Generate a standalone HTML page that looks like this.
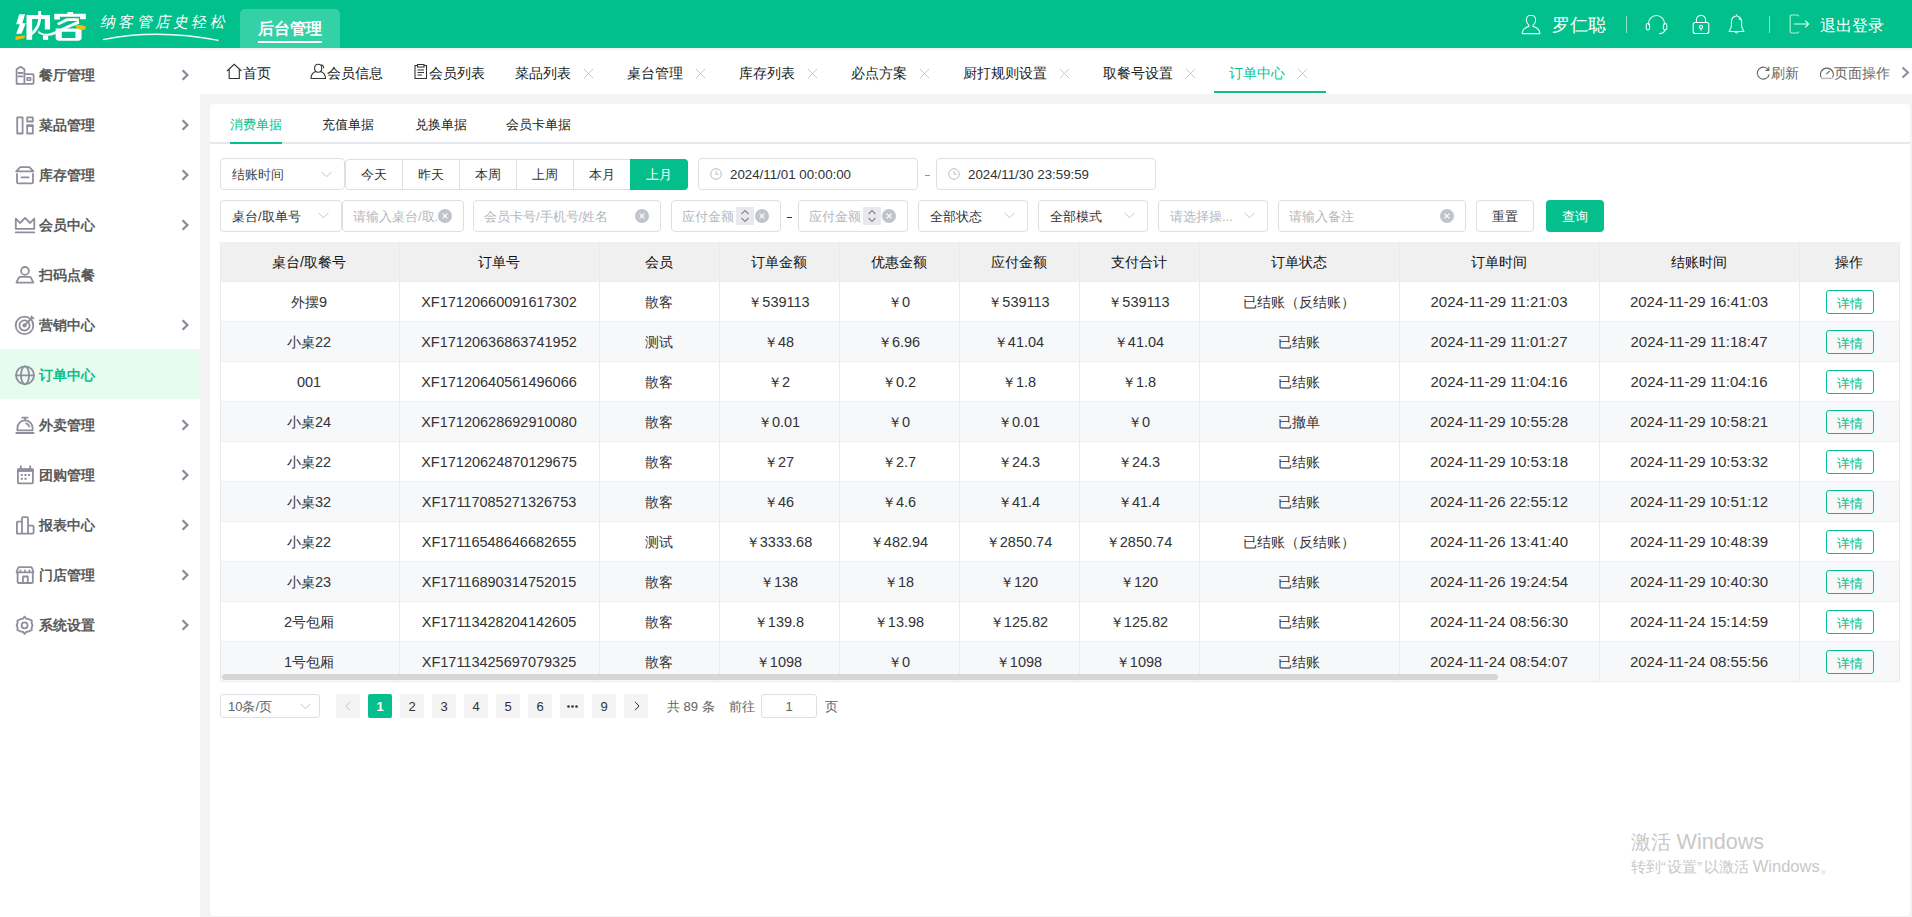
<!DOCTYPE html>
<html><head><meta charset="utf-8">
<style>
*{margin:0;padding:0;box-sizing:border-box}
html,body{width:1912px;height:917px;overflow:hidden;background:#fff;font-family:"Liberation Sans",sans-serif;color:#303133}
.a{position:absolute;white-space:nowrap}
#hdr{position:absolute;left:0;top:0;width:1912px;height:49px;background:#01C08C}
#side{position:absolute;left:0;top:48px;width:200px;height:869px;background:#fff}
#main{position:absolute;left:200px;top:48px;width:1712px;height:869px;background:#f3f3f3}
#tabbar{position:absolute;left:200px;top:49px;width:1712px;height:45px;background:#fff;border-top:1px solid #f5f1f3}
#card{position:absolute;left:210px;top:104px;width:1700px;height:812px;background:#fff;border-radius:4px}
.si{position:absolute;left:0;width:200px;height:50px}
.si .t{position:absolute;left:39px;top:1px;line-height:50px;font-size:14px;font-weight:bold;color:#5a5a5a}
.si svg.ic{position:absolute;left:15px;top:16px}
.si svg.ch{position:absolute;left:180px;top:19px}
.tb{position:absolute;top:49px;height:45px;line-height:46px;font-size:14px;color:#222}
.tb .x{position:absolute;top:19px;width:10px;height:10px}
</style></head><body>
<div id="hdr">
  <svg class="a" style="left:0;top:0" width="100" height="48" viewBox="0 0 100 48">
   <g transform="translate(10 5) scale(0.04708)" fill="#fff">
    <path d="M195 195H320L262 385H335L245 610H130L210 410H130Z"/>
    <path d="M115 670L325 648L300 705L120 745Z" fill="#F5BD0A"/>
    <path d="M350 215H850V520H740V295H470V740H350Z"/>
    <path d="M600 130H660V300Q640 520 470 645L470 560Q590 450 600 300Z"/>
    <path d="M600 540Q700 640 850 600L1000 540Q1200 440 1460 330L1470 400Q1150 520 960 620Q760 700 600 600Z"/>
    <rect x="700" y="650" width="110" height="90"/>
    <rect x="1220" y="150" width="120" height="50"/>
    <path d="M940 185H1610V305H1490V250H1060V310H940Z"/>
    <path d="M1000 390L1200 280H1460V340H1230L1030 430Z"/>
    <path d="M970 500H1520V700Q1520 760 1420 760H1070Q970 760 970 700ZM1100 570V700H1390V570Z" fill-rule="evenodd"/>
    <path d="M1360 430Q1480 410 1610 450L1600 520Q1520 540 1470 520Z" fill="#F5BD0A"/>
   </g>
  </svg>
  <div class="a" style="left:101px;top:11px;font-size:15px;line-height:22px;color:#fff;letter-spacing:3.3px;font-family:'Liberation Serif',serif;transform:skewX(-12deg);font-weight:300">纳客管店史轻松</div>
  <svg class="a" style="left:100px;top:32px" width="125" height="10" viewBox="0 0 125 10"><path d="M3 7.6Q57 -3.5 118.7 8.4" stroke="#f0fff8" stroke-width="1.3" fill="none"/></svg>
  <div class="a" style="left:240px;top:9px;width:100px;height:40px;background:#33D1A5;border-radius:5px 5px 0 0"></div>
  <div class="a" style="left:258px;top:18px;font-size:16px;color:#fff;line-height:22px;font-weight:bold">后台管理</div>
  <div class="a" style="left:258px;top:40.5px;width:64px;height:2.5px;background:#fff"></div>
  <svg class="a" style="left:1520px;top:14px" width="22" height="21" viewBox="0 0 22 21" fill="none" stroke="#e0fff3" stroke-width="1.1"><path d="M11 1.2C8.2 1.2 6.4 3.4 6.4 6.2C6.4 8.4 7.6 10.2 9 11.2V12.4C6 13.2 2.2 15.4 2.2 19.6H19.8C19.8 15.4 16 13.2 13 12.4V11.2C14.4 10.2 15.6 8.4 15.6 6.2C15.6 3.4 13.8 1.2 11 1.2Z"/></svg>
  <div class="a" style="left:1552px;top:13px;font-size:18px;line-height:24px;color:#fff">罗仁聪</div>
  <div class="a" style="left:1626px;top:16px;width:1px;height:17px;background:rgba(255,255,255,0.55)"></div>
  <svg class="a" style="left:1645px;top:14px" width="23" height="21" viewBox="0 0 23 21" fill="none" stroke="#e0fff3" stroke-width="1.1"><path d="M3.5 11V9.5A8 8 0 0 1 19.5 9.5V11"/><rect x="1.2" y="9.5" width="3.4" height="6.5" rx="1.7"/><rect x="18.4" y="9.5" width="3.4" height="6.5" rx="1.7"/><path d="M20 16Q19 19.6 14 19.8"/></svg>
  <svg class="a" style="left:1692px;top:14px" width="18" height="21" viewBox="0 0 18 21" fill="none" stroke="#fff" stroke-width="1.1"><path d="M4.4 8.5V6A4.6 4.6 0 0 1 13.6 6V8.5"/><rect x="1.2" y="8.5" width="15.6" height="11" rx="2"/><circle cx="9" cy="13" r="1.6"/><path d="M9 14.6V16.4"/></svg>
  <svg class="a" style="left:1728px;top:13px" width="17" height="22" viewBox="0 0 17 22" fill="none" stroke="#e0fff3" stroke-width="1.1"><path d="M8.5 1.2V3M8.5 3C5 3 3.4 5.8 3.4 9V13.5L1.2 18.5H15.8L13.6 13.5V9C13.6 5.8 12 3 8.5 3ZM6.8 18.8Q8.5 21.2 10.2 18.8M10.6 4.8Q11.8 5.6 12.2 7"/></svg>
  <div class="a" style="left:1769px;top:16px;width:1px;height:17px;background:rgba(255,255,255,0.55)"></div>
  <svg class="a" style="left:1789px;top:14px" width="22" height="20" viewBox="0 0 22 20" fill="none" stroke-width="1.2"><path d="M9.5 2.2V2A1.2 1.2 0 0 0 8.3 1H2.4A1.2 1.2 0 0 0 1.2 2.2V17.8A1.2 1.2 0 0 0 2.4 19H8.3A1.2 1.2 0 0 0 9.5 17.8V17.5" stroke="#a8f0d6"/><path d="M5 10H19.5M16.2 6.6L19.6 10L16.2 13.4" stroke="#e0fff3"/></svg>
  <div class="a" style="left:1820px;top:14px;font-size:16px;line-height:24px;color:#fff">退出登录</div>
</div>
<div id="side"></div>
<div class="si" style="top:49px;"><svg class="ic" style="top:13px;left:12px" width="28" height="28" viewBox="0 0 28 28" fill="none" stroke="#8f8e9d" stroke-width="1.8" stroke-linejoin="round" stroke-linecap="round"><path d="M4.6 21.8V7.3L8.5 4.8L12.4 7.3V21.8ZM12.4 12.1H20.6Q21.6 12.1 21.6 13.1V20.8Q21.6 21.8 20.6 21.8H4.6M6.6 11H10.4M6.6 14.4H10.4"/><rect x="15.2" y="15.8" width="3.4" height="2.4" stroke-width="1.6"/></svg><div class="t" style="">餐厅管理</div><svg class="ch" width="10" height="14" viewBox="0 0 10 14"><path d="M2.6 2.2L7.4 7L2.6 11.8" fill="none" stroke="#8c8b9b" stroke-width="2.3"/></svg></div>
<div class="si" style="top:99px;"><svg class="ic" style="top:13px;left:12px" width="28" height="28" viewBox="0 0 28 28" fill="none" stroke="#8f8e9d" stroke-width="1.8" stroke-linejoin="round" stroke-linecap="round"><rect x="5.2" y="5.3" width="5.4" height="16.2"/><rect x="15.2" y="5.3" width="5.6" height="4.2"/><rect x="15.2" y="13.2" width="5.6" height="8.3"/><path d="M15.2 14H20.8"/></svg><div class="t" style="">菜品管理</div><svg class="ch" width="10" height="14" viewBox="0 0 10 14"><path d="M2.6 2.2L7.4 7L2.6 11.8" fill="none" stroke="#8c8b9b" stroke-width="2.3"/></svg></div>
<div class="si" style="top:149px;"><svg class="ic" style="top:13px;left:12px" width="28" height="28" viewBox="0 0 28 28" fill="none" stroke="#8f8e9d" stroke-width="1.8" stroke-linejoin="round" stroke-linecap="round"><path d="M4.2 9.4L8.2 5.2H17.4L21.5 9.4ZM5 11.8V20Q5 21.4 6.4 21.4H19.6Q21 21.4 21 20V11.8M9.4 15.4H16.6"/></svg><div class="t" style="">库存管理</div><svg class="ch" width="10" height="14" viewBox="0 0 10 14"><path d="M2.6 2.2L7.4 7L2.6 11.8" fill="none" stroke="#8c8b9b" stroke-width="2.3"/></svg></div>
<div class="si" style="top:199px;"><svg class="ic" style="top:13px;left:12px" width="28" height="28" viewBox="0 0 28 28" fill="none" stroke="#8f8e9d" stroke-width="1.8" stroke-linejoin="round" stroke-linecap="round"><path d="M3.8 16.8V6.6L8 11L13.1 5.9L18.1 11L22.3 6.6V16.8ZM3.8 20.4H22.3"/></svg><div class="t" style="">会员中心</div><svg class="ch" width="10" height="14" viewBox="0 0 10 14"><path d="M2.6 2.2L7.4 7L2.6 11.8" fill="none" stroke="#8c8b9b" stroke-width="2.3"/></svg></div>
<div class="si" style="top:249px;"><svg class="ic" style="top:13px;left:12px" width="28" height="28" viewBox="0 0 28 28" fill="none" stroke="#8f8e9d" stroke-width="1.8" stroke-linejoin="round" stroke-linecap="round"><circle cx="13" cy="8.9" r="3.9"/><path d="M4.4 20.6L6.8 15.7Q7.4 14.9 8.6 14.9H17.4Q18.4 14.9 19 15.8L21.4 20.6Z"/></svg><div class="t" style="">扫码点餐</div></div>
<div class="si" style="top:299px;"><svg class="ic" style="top:13px;left:12px" width="28" height="28" viewBox="0 0 28 28" fill="none" stroke="#8f8e9d" stroke-width="1.8" stroke-linejoin="round" stroke-linecap="round"><circle cx="12.5" cy="13.4" r="8.8"/><circle cx="12.5" cy="13.4" r="5.1"/><circle cx="12.5" cy="13.4" r="1.2"/><path d="M12.5 13.4L20.4 5.5M19.6 4.4V6.3H21.5"/></svg><div class="t" style="">营销中心</div><svg class="ch" width="10" height="14" viewBox="0 0 10 14"><path d="M2.6 2.2L7.4 7L2.6 11.8" fill="none" stroke="#8c8b9b" stroke-width="2.3"/></svg></div>
<div class="si" style="top:349px;background:#e6fcef;"><svg class="ic" style="top:13px;left:12px" width="28" height="28" viewBox="0 0 28 28" fill="none" stroke="#8f8e9d" stroke-width="1.8" stroke-linejoin="round" stroke-linecap="round"><circle cx="13" cy="13.3" r="9"/><ellipse cx="13" cy="13.3" rx="4" ry="9"/><path d="M4 13.3H22"/></svg><div class="t" style="color:#0abf8a;">订单中心</div></div>
<div class="si" style="top:399px;"><svg class="ic" style="top:13px;left:12px" width="28" height="28" viewBox="0 0 28 28" fill="none" stroke="#8f8e9d" stroke-width="1.8" stroke-linejoin="round" stroke-linecap="round"><path d="M10.3 5.7H15.7M13 5.7V8.3M5.4 18.3V16A7.6 7.6 0 0 1 20.6 16V18.3ZM14.2 11.4Q16.3 12.2 17.3 14.4M4.3 21H21.6"/></svg><div class="t" style="">外卖管理</div><svg class="ch" width="10" height="14" viewBox="0 0 10 14"><path d="M2.6 2.2L7.4 7L2.6 11.8" fill="none" stroke="#8c8b9b" stroke-width="2.3"/></svg></div>
<div class="si" style="top:449px;"><svg class="ic" style="top:13px;left:12px" width="28" height="28" viewBox="0 0 28 28" fill="none" stroke="#8f8e9d" stroke-width="1.8" stroke-linejoin="round" stroke-linecap="round"><rect x="5.9" y="7.2" width="15" height="14.2" rx="0.8"/><path d="M5.9 8.9H20.9M8.8 4.2V6.8M18.2 4.2V6.8" /><rect x="5.2" y="6.6" width="16.4" height="3" fill="#8f8e9d" stroke="none"/><g fill="#8f8e9d" stroke="none"><rect x="8.8" y="12" width="2" height="2"/><rect x="12.5" y="12" width="2" height="2"/><rect x="16.1" y="12" width="2" height="2"/><rect x="8.8" y="15.8" width="2" height="2"/><rect x="12.5" y="15.8" width="2" height="2"/></g></svg><div class="t" style="">团购管理</div><svg class="ch" width="10" height="14" viewBox="0 0 10 14"><path d="M2.6 2.2L7.4 7L2.6 11.8" fill="none" stroke="#8c8b9b" stroke-width="2.3"/></svg></div>
<div class="si" style="top:499px;"><svg class="ic" style="top:13px;left:12px" width="28" height="28" viewBox="0 0 28 28" fill="none" stroke="#8f8e9d" stroke-width="1.8" stroke-linejoin="round" stroke-linecap="round"><path d="M4.9 21.6V10.6Q4.9 9.6 5.9 9.6H10V21.6ZM10 21.6V6.2Q10 5.2 11 5.2H15Q16 5.2 16 6.2V21.6ZM16 21.6V14.6Q16 13.6 17 13.6H20.6Q21.6 13.6 21.6 14.6V20.6Q21.6 21.6 20.6 21.6H4.9"/></svg><div class="t" style="">报表中心</div><svg class="ch" width="10" height="14" viewBox="0 0 10 14"><path d="M2.6 2.2L7.4 7L2.6 11.8" fill="none" stroke="#8c8b9b" stroke-width="2.3"/></svg></div>
<div class="si" style="top:549px;"><svg class="ic" style="top:13px;left:12px" width="28" height="28" viewBox="0 0 28 28" fill="none" stroke="#8f8e9d" stroke-width="1.8" stroke-linejoin="round" stroke-linecap="round"><path d="M4.6 10.4L6 6Q6.4 5.1 7.4 5.1H18.6Q19.6 5.1 20 6L21.5 10.4ZM8.4 8.5L8.4 10.4M12.9 8.5V10.4M17.4 8.5V10.4M5.6 10.4V20Q5.6 21 6.6 21H19.8Q20.8 21 20.8 20V10.4M11 21V14.5H15.8V21"/></svg><div class="t" style="">门店管理</div><svg class="ch" width="10" height="14" viewBox="0 0 10 14"><path d="M2.6 2.2L7.4 7L2.6 11.8" fill="none" stroke="#8c8b9b" stroke-width="2.3"/></svg></div>
<div class="si" style="top:599px;"><svg class="ic" style="top:13px;left:12px" width="28" height="28" viewBox="0 0 28 28" fill="none" stroke="#8f8e9d" stroke-width="1.8" stroke-linejoin="round" stroke-linecap="round"><path d="M12.6 4.6L14 6.6L16.8 7.2L19.8 8.6L19.6 11.1L20.6 13.3L19.6 15.6L19.8 18L16.8 19.4L14 20L12.6 22L11.2 20L8.4 19.4L5.4 18L5.6 15.6L4.6 13.3L5.6 11.1L5.4 8.6L8.4 7.2L11.2 6.6Z"/><circle cx="12.6" cy="13.3" r="3"/></svg><div class="t" style="">系统设置</div><svg class="ch" width="10" height="14" viewBox="0 0 10 14"><path d="M2.6 2.2L7.4 7L2.6 11.8" fill="none" stroke="#8c8b9b" stroke-width="2.3"/></svg></div>
<div id="main"></div>
<div id="tabbar"></div>
<svg class="a" style="left:226px;top:63px" width="17" height="17" viewBox="0 0 17 17" fill="none" stroke="#333" stroke-width="1.1"><path d="M1 8L8.2 1.3L15.5 8M3.2 6.2V15.5H13.3V6.2"/></svg>
<svg class="a" style="left:310px;top:63px" width="17" height="17" viewBox="0 0 17 17" fill="none" stroke="#333" stroke-width="1.1"><path d="M8.2 1.2C6 1.2 4.6 3 4.6 5.2C4.6 7.3 6 9.2 8.2 9.2C10.4 9.2 11.8 7.3 11.8 5.2C11.8 3 10.4 1.2 8.2 1.2ZM5.6 8.4C3 9.4 1 12.2 1 15.5H15.5C15.5 12.2 13.5 9.4 10.8 8.4M11.4 1.5C13 2.2 13.8 3.8 13.8 5.2"/></svg>
<svg class="a" style="left:413px;top:63px" width="16" height="17" viewBox="0 0 16 17" fill="none" stroke="#333" stroke-width="1.1"><path d="M4.5 2.5H2V15.5H13.5V2.5H11M4.5 1.5H11V4H4.5ZM4.5 7H11M4.5 9.5H11M4.5 12H9"/></svg>
<div class="a" style="left:243px;top:63px;font-size:14px;line-height:20px;color:#1a1a1a">首页</div>
<div class="a" style="left:327px;top:63px;font-size:14px;line-height:20px;color:#1a1a1a">会员信息</div>
<div class="a" style="left:429px;top:63px;font-size:14px;line-height:20px;color:#1a1a1a">会员列表</div>
<div class="a" style="left:515px;top:63px;font-size:14px;line-height:20px;color:#1a1a1a">菜品列表</div>
<svg class="a" style="left:583px;top:68px" width="11" height="11" viewBox="0 0 11 11"><path d="M1 1L10 10M10 1L1 10" stroke="#c8c8d0" stroke-width="1"/></svg>
<div class="a" style="left:627px;top:63px;font-size:14px;line-height:20px;color:#1a1a1a">桌台管理</div>
<svg class="a" style="left:695px;top:68px" width="11" height="11" viewBox="0 0 11 11"><path d="M1 1L10 10M10 1L1 10" stroke="#c8c8d0" stroke-width="1"/></svg>
<div class="a" style="left:739px;top:63px;font-size:14px;line-height:20px;color:#1a1a1a">库存列表</div>
<svg class="a" style="left:807px;top:68px" width="11" height="11" viewBox="0 0 11 11"><path d="M1 1L10 10M10 1L1 10" stroke="#c8c8d0" stroke-width="1"/></svg>
<div class="a" style="left:851px;top:63px;font-size:14px;line-height:20px;color:#1a1a1a">必点方案</div>
<svg class="a" style="left:919px;top:68px" width="11" height="11" viewBox="0 0 11 11"><path d="M1 1L10 10M10 1L1 10" stroke="#c8c8d0" stroke-width="1"/></svg>
<div class="a" style="left:963px;top:63px;font-size:14px;line-height:20px;color:#1a1a1a">厨打规则设置</div>
<svg class="a" style="left:1059px;top:68px" width="11" height="11" viewBox="0 0 11 11"><path d="M1 1L10 10M10 1L1 10" stroke="#c8c8d0" stroke-width="1"/></svg>
<div class="a" style="left:1103px;top:63px;font-size:14px;line-height:20px;color:#1a1a1a">取餐号设置</div>
<svg class="a" style="left:1185px;top:68px" width="11" height="11" viewBox="0 0 11 11"><path d="M1 1L10 10M10 1L1 10" stroke="#c8c8d0" stroke-width="1"/></svg>
<div class="a" style="left:1229px;top:63px;font-size:14px;line-height:20px;color:#0cbf8c">订单中心</div>
<svg class="a" style="left:1297px;top:68px" width="11" height="11" viewBox="0 0 11 11"><path d="M1 1L10 10M10 1L1 10" stroke="#c8c8d0" stroke-width="1"/></svg>
<div class="a" style="left:1214px;top:91px;width:112px;height:2px;background:#0cbf8c"></div>
<svg class="a" style="left:1756px;top:65px" width="15" height="15" viewBox="0 0 15 15" fill="none" stroke="#666" stroke-width="1.1"><path d="M12.6 5.2A6 6 0 1 0 13.2 9.5M12.8 1.8V5.4H9.4"/></svg>
<div class="a" style="left:1771px;top:63px;font-size:14px;line-height:20px;color:#666">刷新</div>
<svg class="a" style="left:1819px;top:65px" width="16" height="15" viewBox="0 0 16 15" fill="none" stroke="#666" stroke-width="1.1"><path d="M2.2 12.4A6.4 6.4 0 1 1 13.6 12.4"/><path d="M2 13.4H13.8" stroke="#bbb" stroke-width="1.5"/><path d="M7.4 9.2L10.6 6"/></svg>
<div class="a" style="left:1834px;top:63px;font-size:14px;line-height:20px;color:#666">页面操作</div>
<svg class="a" style="left:1900px;top:66px" width="11" height="13" viewBox="0 0 11 13"><path d="M2.5 1.5L8 6.5L2.5 11.5" fill="none" stroke="#8c8b9b" stroke-width="2"/></svg>
<div id="card"></div>
<div class="a" style="left:210px;top:142px;width:1700px;height:2px;background:#e4e7ed"></div>
<div class="a" style="left:230px;top:115px;font-size:13px;line-height:20px;color:#04BF8B">消费单据</div>
<div class="a" style="left:322px;top:115px;font-size:13px;line-height:20px;color:#222">充值单据</div>
<div class="a" style="left:415px;top:115px;font-size:13px;line-height:20px;color:#222">兑换单据</div>
<div class="a" style="left:506px;top:115px;font-size:13px;line-height:20px;color:#222">会员卡单据</div>
<div class="a" style="left:230px;top:142px;width:52px;height:2px;background:#04BF8B"></div>
<div class="a" style="left:220px;top:158px;width:125px;height:32px;border:1px solid #dcdfe6;border-radius:4px;background:#fff;"></div>
<div class="a" style="left:232px;top:165px;font-size:13px;line-height:20px;color:#454545;">结账时间</div>
<svg class="a" style="left:321px;top:171px" width="11" height="7" viewBox="0 0 11 7"><path d="M0.5 0.8L5.5 5.8L10.5 0.8" fill="none" stroke="#c0c4cc" stroke-width="1"/></svg>
<div class="a" style="left:345px;top:159px;width:343px;height:31px;border:1px solid #dcdfe6;border-radius:4px;background:#fff"></div>
<div class="a" style="left:345px;top:165px;width:57px;text-align:center;font-size:13px;line-height:20px;color:#303133">今天</div>
<div class="a" style="left:402px;top:159px;width:1px;height:31px;background:#dcdfe6"></div>
<div class="a" style="left:402px;top:165px;width:57px;text-align:center;font-size:13px;line-height:20px;color:#303133">昨天</div>
<div class="a" style="left:459px;top:159px;width:1px;height:31px;background:#dcdfe6"></div>
<div class="a" style="left:459px;top:165px;width:57px;text-align:center;font-size:13px;line-height:20px;color:#303133">本周</div>
<div class="a" style="left:516px;top:159px;width:1px;height:31px;background:#dcdfe6"></div>
<div class="a" style="left:516px;top:165px;width:57px;text-align:center;font-size:13px;line-height:20px;color:#303133">上周</div>
<div class="a" style="left:573px;top:159px;width:1px;height:31px;background:#dcdfe6"></div>
<div class="a" style="left:573px;top:165px;width:57px;text-align:center;font-size:13px;line-height:20px;color:#303133">本月</div>
<div class="a" style="left:630px;top:159px;width:58px;height:31px;background:#04BF8B;border-radius:0 4px 4px 0"></div>
<div class="a" style="left:630px;top:165px;width:58px;text-align:center;font-size:13px;line-height:20px;color:#fff">上月</div>
<div class="a" style="left:698px;top:158px;width:220px;height:32px;border:1px solid #dcdfe6;border-radius:4px;background:#fff;"></div>
<svg class="a" style="left:710px;top:168px" width="12" height="12" viewBox="0 0 12 12" fill="none" stroke="#b8bcc4" stroke-width="1"><circle cx="6" cy="6" r="5.3"/><path d="M6 2.8V6.2H8.6"/></svg>
<div class="a" style="left:730px;top:165px;font-size:13.3px;line-height:20px;color:#303133;">2024/11/01 00:00:00</div>
<div class="a" style="left:925px;top:175px;width:5px;height:1px;background:#999"></div>
<div class="a" style="left:936px;top:158px;width:220px;height:32px;border:1px solid #dcdfe6;border-radius:4px;background:#fff;"></div>
<svg class="a" style="left:948px;top:168px" width="12" height="12" viewBox="0 0 12 12" fill="none" stroke="#b8bcc4" stroke-width="1"><circle cx="6" cy="6" r="5.3"/><path d="M6 2.8V6.2H8.6"/></svg>
<div class="a" style="left:968px;top:165px;font-size:13.3px;line-height:20px;color:#303133;">2024/11/30 23:59:59</div>
<div class="a" style="left:220px;top:200px;width:122px;height:32px;border:1px solid #dcdfe6;border-radius:4px;background:#fff;"></div>
<div class="a" style="left:232px;top:207px;font-size:13px;line-height:20px;color:#303133;">桌台/取单号</div>
<svg class="a" style="left:318px;top:212px" width="11" height="7" viewBox="0 0 11 7"><path d="M0.5 0.8L5.5 5.8L10.5 0.8" fill="none" stroke="#c0c4cc" stroke-width="1"/></svg>
<div class="a" style="left:342px;top:200px;width:122px;height:32px;border:1px solid #dcdfe6;border-radius:4px;background:#fff;"></div>
<div class="a" style="left:353px;top:207px;font-size:13px;line-height:20px;color:#b4b7be;">请输入桌台/取.</div>
<svg class="a" style="left:438px;top:209px" width="14" height="14" viewBox="0 0 14 14"><circle cx="7" cy="7" r="7" fill="#c0c4cc"/><path d="M4.6 4.6L9.4 9.4M9.4 4.6L4.6 9.4" stroke="#fff" stroke-width="1.2"/></svg>
<div class="a" style="left:473px;top:200px;width:188px;height:32px;border:1px solid #dcdfe6;border-radius:4px;background:#fff;"></div>
<div class="a" style="left:484px;top:207px;font-size:13px;line-height:20px;color:#b4b7be;">会员卡号/手机号/姓名</div>
<svg class="a" style="left:635px;top:209px" width="14" height="14" viewBox="0 0 14 14"><circle cx="7" cy="7" r="7" fill="#c0c4cc"/><path d="M4.6 4.6L9.4 9.4M9.4 4.6L4.6 9.4" stroke="#fff" stroke-width="1.2"/></svg>
<div class="a" style="left:671px;top:200px;width:110px;height:32px;border:1px solid #dcdfe6;border-radius:4px;background:#fff;"></div>
<div class="a" style="left:682px;top:207px;font-size:13px;line-height:20px;color:#b4b7be;">应付金额</div>
<div class="a" style="left:736px;top:207px;width:18px;height:18px;background:#e8e8ee"></div><svg class="a" style="left:736px;top:207px" width="18" height="18" viewBox="0 0 18 18" fill="none" stroke="#888" stroke-width="1.1"><path d="M5.5 7L9 3.5L12.5 7M5.5 11L9 14.5L12.5 11"/></svg>
<svg class="a" style="left:755px;top:209px" width="14" height="14" viewBox="0 0 14 14"><circle cx="7" cy="7" r="7" fill="#c0c4cc"/><path d="M4.6 4.6L9.4 9.4M9.4 4.6L4.6 9.4" stroke="#fff" stroke-width="1.2"/></svg>
<div class="a" style="left:787px;top:217px;width:5px;height:1px;background:#303133"></div>
<div class="a" style="left:798px;top:200px;width:110px;height:32px;border:1px solid #dcdfe6;border-radius:4px;background:#fff;"></div>
<div class="a" style="left:809px;top:207px;font-size:13px;line-height:20px;color:#b4b7be;">应付金额</div>
<div class="a" style="left:863px;top:207px;width:18px;height:18px;background:#e8e8ee"></div><svg class="a" style="left:863px;top:207px" width="18" height="18" viewBox="0 0 18 18" fill="none" stroke="#888" stroke-width="1.1"><path d="M5.5 7L9 3.5L12.5 7M5.5 11L9 14.5L12.5 11"/></svg>
<svg class="a" style="left:882px;top:209px" width="14" height="14" viewBox="0 0 14 14"><circle cx="7" cy="7" r="7" fill="#c0c4cc"/><path d="M4.6 4.6L9.4 9.4M9.4 4.6L4.6 9.4" stroke="#fff" stroke-width="1.2"/></svg>
<div class="a" style="left:918px;top:200px;width:110px;height:32px;border:1px solid #dcdfe6;border-radius:4px;background:#fff;"></div>
<div class="a" style="left:930px;top:207px;font-size:13px;line-height:20px;color:#303133;">全部状态</div>
<svg class="a" style="left:1004px;top:212px" width="11" height="7" viewBox="0 0 11 7"><path d="M0.5 0.8L5.5 5.8L10.5 0.8" fill="none" stroke="#c0c4cc" stroke-width="1"/></svg>
<div class="a" style="left:1038px;top:200px;width:110px;height:32px;border:1px solid #dcdfe6;border-radius:4px;background:#fff;"></div>
<div class="a" style="left:1050px;top:207px;font-size:13px;line-height:20px;color:#303133;">全部模式</div>
<svg class="a" style="left:1124px;top:212px" width="11" height="7" viewBox="0 0 11 7"><path d="M0.5 0.8L5.5 5.8L10.5 0.8" fill="none" stroke="#c0c4cc" stroke-width="1"/></svg>
<div class="a" style="left:1158px;top:200px;width:110px;height:32px;border:1px solid #dcdfe6;border-radius:4px;background:#fff;"></div>
<div class="a" style="left:1170px;top:207px;font-size:13px;line-height:20px;color:#b4b7be;">请选择操...</div>
<svg class="a" style="left:1244px;top:212px" width="11" height="7" viewBox="0 0 11 7"><path d="M0.5 0.8L5.5 5.8L10.5 0.8" fill="none" stroke="#c0c4cc" stroke-width="1"/></svg>
<div class="a" style="left:1278px;top:200px;width:188px;height:32px;border:1px solid #dcdfe6;border-radius:4px;background:#fff;"></div>
<div class="a" style="left:1289px;top:207px;font-size:13px;line-height:20px;color:#b4b7be;">请输入备注</div>
<svg class="a" style="left:1440px;top:209px" width="14" height="14" viewBox="0 0 14 14"><circle cx="7" cy="7" r="7" fill="#c0c4cc"/><path d="M4.6 4.6L9.4 9.4M9.4 4.6L4.6 9.4" stroke="#fff" stroke-width="1.2"/></svg>
<div class="a" style="left:1476px;top:200px;width:58px;height:32px;border:1px solid #dcdfe6;border-radius:4px;background:#fff;"></div>
<div class="a" style="left:1476px;top:207px;font-size:13px;line-height:20px;color:#303133;width:58px;text-align:center">重置</div>
<div class="a" style="left:1546px;top:200px;width:58px;height:32px;background:#04BF8B;border-radius:4px"></div>
<div class="a" style="left:1546px;top:207px;font-size:13px;line-height:20px;color:#fff;width:58px;text-align:center">查询</div>

<style>.tc{position:absolute;white-space:nowrap;text-align:center;font-size:14px;line-height:20px;color:#333}.n{font-size:14.5px}.d{font-size:15px}</style>
<div class="a" style="left:220px;top:242px;width:1680px;height:40px;background:#f0f0f0"></div>
<div class="a" style="left:220px;top:281px;width:1680px;height:40px;background:#fff;border-top:1px solid #ebeef5"></div>
<div class="a" style="left:220px;top:321px;width:1680px;height:40px;background:#f7f8fa;border-top:1px solid #ebeef5"></div>
<div class="a" style="left:220px;top:361px;width:1680px;height:40px;background:#fff;border-top:1px solid #ebeef5"></div>
<div class="a" style="left:220px;top:401px;width:1680px;height:40px;background:#f7f8fa;border-top:1px solid #ebeef5"></div>
<div class="a" style="left:220px;top:441px;width:1680px;height:40px;background:#fff;border-top:1px solid #ebeef5"></div>
<div class="a" style="left:220px;top:481px;width:1680px;height:40px;background:#f7f8fa;border-top:1px solid #ebeef5"></div>
<div class="a" style="left:220px;top:521px;width:1680px;height:40px;background:#fff;border-top:1px solid #ebeef5"></div>
<div class="a" style="left:220px;top:561px;width:1680px;height:40px;background:#f7f8fa;border-top:1px solid #ebeef5"></div>
<div class="a" style="left:220px;top:601px;width:1680px;height:40px;background:#fff;border-top:1px solid #ebeef5"></div>
<div class="a" style="left:220px;top:641px;width:1680px;height:40px;background:#f7f8fa;border-top:1px solid #ebeef5"></div>
<div class="a" style="left:220px;top:681px;width:1680px;height:1px;background:#ebeef5"></div>
<div class="a" style="left:220px;top:242px;width:1px;height:440px;background:#ebebeb"></div>
<div class="a" style="left:399px;top:242px;width:1px;height:440px;background:#ebebeb"></div>
<div class="a" style="left:599px;top:242px;width:1px;height:440px;background:#ebebeb"></div>
<div class="a" style="left:719px;top:242px;width:1px;height:440px;background:#ebebeb"></div>
<div class="a" style="left:839px;top:242px;width:1px;height:440px;background:#ebebeb"></div>
<div class="a" style="left:959px;top:242px;width:1px;height:440px;background:#ebebeb"></div>
<div class="a" style="left:1079px;top:242px;width:1px;height:440px;background:#ebebeb"></div>
<div class="a" style="left:1199px;top:242px;width:1px;height:440px;background:#ebebeb"></div>
<div class="a" style="left:1399px;top:242px;width:1px;height:440px;background:#ebebeb"></div>
<div class="a" style="left:1599px;top:242px;width:1px;height:440px;background:#ebebeb"></div>
<div class="a" style="left:1799px;top:242px;width:1px;height:440px;background:#ebebeb"></div>
<div class="a" style="left:1899px;top:242px;width:1px;height:440px;background:#ebebeb"></div>
<div class="tc" style="left:219px;top:252px;width:180px;color:#111;font-weight:500">桌台/取餐号</div>
<div class="tc" style="left:399px;top:252px;width:200px;color:#111;font-weight:500">订单号</div>
<div class="tc" style="left:599px;top:252px;width:120px;color:#111;font-weight:500">会员</div>
<div class="tc" style="left:719px;top:252px;width:120px;color:#111;font-weight:500">订单金额</div>
<div class="tc" style="left:839px;top:252px;width:120px;color:#111;font-weight:500">优惠金额</div>
<div class="tc" style="left:959px;top:252px;width:120px;color:#111;font-weight:500">应付金额</div>
<div class="tc" style="left:1079px;top:252px;width:120px;color:#111;font-weight:500">支付合计</div>
<div class="tc" style="left:1199px;top:252px;width:200px;color:#111;font-weight:500">订单状态</div>
<div class="tc" style="left:1399px;top:252px;width:200px;color:#111;font-weight:500">订单时间</div>
<div class="tc" style="left:1599px;top:252px;width:200px;color:#111;font-weight:500">结账时间</div>
<div class="tc" style="left:1799px;top:252px;width:100px;color:#111;font-weight:500">操作</div>
<div class="tc" style="left:219px;top:292px;width:180px">外摆<span class="n">9</span></div>
<div class="tc" style="left:399px;top:292px;width:200px"><span class="n">XF17120660091617302</span></div>
<div class="tc" style="left:599px;top:292px;width:120px">散客</div>
<div class="tc" style="left:719px;top:292px;width:120px">￥<span class="n">539113</span></div>
<div class="tc" style="left:839px;top:292px;width:120px">￥<span class="n">0</span></div>
<div class="tc" style="left:959px;top:292px;width:120px">￥<span class="n">539113</span></div>
<div class="tc" style="left:1079px;top:292px;width:120px">￥<span class="n">539113</span></div>
<div class="tc" style="left:1199px;top:292px;width:200px">已结账（反结账）</div>
<div class="tc" style="left:1399px;top:292px;width:200px"><span class="d">2024-11-29 11:21:03</span></div>
<div class="tc" style="left:1599px;top:292px;width:200px"><span class="d">2024-11-29 16:41:03</span></div>
<div class="a" style="left:1826px;top:290px;width:48px;height:24px;border:1px solid #04BF8B;border-radius:3px;text-align:center;font-size:13px;line-height:25px;color:#04BF8B">详情</div>
<div class="tc" style="left:219px;top:332px;width:180px">小桌<span class="n">22</span></div>
<div class="tc" style="left:399px;top:332px;width:200px"><span class="n">XF17120636863741952</span></div>
<div class="tc" style="left:599px;top:332px;width:120px">测试</div>
<div class="tc" style="left:719px;top:332px;width:120px">￥<span class="n">48</span></div>
<div class="tc" style="left:839px;top:332px;width:120px">￥<span class="n">6.96</span></div>
<div class="tc" style="left:959px;top:332px;width:120px">￥<span class="n">41.04</span></div>
<div class="tc" style="left:1079px;top:332px;width:120px">￥<span class="n">41.04</span></div>
<div class="tc" style="left:1199px;top:332px;width:200px">已结账</div>
<div class="tc" style="left:1399px;top:332px;width:200px"><span class="d">2024-11-29 11:01:27</span></div>
<div class="tc" style="left:1599px;top:332px;width:200px"><span class="d">2024-11-29 11:18:47</span></div>
<div class="a" style="left:1826px;top:330px;width:48px;height:24px;border:1px solid #04BF8B;border-radius:3px;text-align:center;font-size:13px;line-height:25px;color:#04BF8B">详情</div>
<div class="tc" style="left:219px;top:372px;width:180px"><span class="n">001</span></div>
<div class="tc" style="left:399px;top:372px;width:200px"><span class="n">XF17120640561496066</span></div>
<div class="tc" style="left:599px;top:372px;width:120px">散客</div>
<div class="tc" style="left:719px;top:372px;width:120px">￥<span class="n">2</span></div>
<div class="tc" style="left:839px;top:372px;width:120px">￥<span class="n">0.2</span></div>
<div class="tc" style="left:959px;top:372px;width:120px">￥<span class="n">1.8</span></div>
<div class="tc" style="left:1079px;top:372px;width:120px">￥<span class="n">1.8</span></div>
<div class="tc" style="left:1199px;top:372px;width:200px">已结账</div>
<div class="tc" style="left:1399px;top:372px;width:200px"><span class="d">2024-11-29 11:04:16</span></div>
<div class="tc" style="left:1599px;top:372px;width:200px"><span class="d">2024-11-29 11:04:16</span></div>
<div class="a" style="left:1826px;top:370px;width:48px;height:24px;border:1px solid #04BF8B;border-radius:3px;text-align:center;font-size:13px;line-height:25px;color:#04BF8B">详情</div>
<div class="tc" style="left:219px;top:412px;width:180px">小桌<span class="n">24</span></div>
<div class="tc" style="left:399px;top:412px;width:200px"><span class="n">XF17120628692910080</span></div>
<div class="tc" style="left:599px;top:412px;width:120px">散客</div>
<div class="tc" style="left:719px;top:412px;width:120px">￥<span class="n">0.01</span></div>
<div class="tc" style="left:839px;top:412px;width:120px">￥<span class="n">0</span></div>
<div class="tc" style="left:959px;top:412px;width:120px">￥<span class="n">0.01</span></div>
<div class="tc" style="left:1079px;top:412px;width:120px">￥<span class="n">0</span></div>
<div class="tc" style="left:1199px;top:412px;width:200px">已撤单</div>
<div class="tc" style="left:1399px;top:412px;width:200px"><span class="d">2024-11-29 10:55:28</span></div>
<div class="tc" style="left:1599px;top:412px;width:200px"><span class="d">2024-11-29 10:58:21</span></div>
<div class="a" style="left:1826px;top:410px;width:48px;height:24px;border:1px solid #04BF8B;border-radius:3px;text-align:center;font-size:13px;line-height:25px;color:#04BF8B">详情</div>
<div class="tc" style="left:219px;top:452px;width:180px">小桌<span class="n">22</span></div>
<div class="tc" style="left:399px;top:452px;width:200px"><span class="n">XF17120624870129675</span></div>
<div class="tc" style="left:599px;top:452px;width:120px">散客</div>
<div class="tc" style="left:719px;top:452px;width:120px">￥<span class="n">27</span></div>
<div class="tc" style="left:839px;top:452px;width:120px">￥<span class="n">2.7</span></div>
<div class="tc" style="left:959px;top:452px;width:120px">￥<span class="n">24.3</span></div>
<div class="tc" style="left:1079px;top:452px;width:120px">￥<span class="n">24.3</span></div>
<div class="tc" style="left:1199px;top:452px;width:200px">已结账</div>
<div class="tc" style="left:1399px;top:452px;width:200px"><span class="d">2024-11-29 10:53:18</span></div>
<div class="tc" style="left:1599px;top:452px;width:200px"><span class="d">2024-11-29 10:53:32</span></div>
<div class="a" style="left:1826px;top:450px;width:48px;height:24px;border:1px solid #04BF8B;border-radius:3px;text-align:center;font-size:13px;line-height:25px;color:#04BF8B">详情</div>
<div class="tc" style="left:219px;top:492px;width:180px">小桌<span class="n">32</span></div>
<div class="tc" style="left:399px;top:492px;width:200px"><span class="n">XF17117085271326753</span></div>
<div class="tc" style="left:599px;top:492px;width:120px">散客</div>
<div class="tc" style="left:719px;top:492px;width:120px">￥<span class="n">46</span></div>
<div class="tc" style="left:839px;top:492px;width:120px">￥<span class="n">4.6</span></div>
<div class="tc" style="left:959px;top:492px;width:120px">￥<span class="n">41.4</span></div>
<div class="tc" style="left:1079px;top:492px;width:120px">￥<span class="n">41.4</span></div>
<div class="tc" style="left:1199px;top:492px;width:200px">已结账</div>
<div class="tc" style="left:1399px;top:492px;width:200px"><span class="d">2024-11-26 22:55:12</span></div>
<div class="tc" style="left:1599px;top:492px;width:200px"><span class="d">2024-11-29 10:51:12</span></div>
<div class="a" style="left:1826px;top:490px;width:48px;height:24px;border:1px solid #04BF8B;border-radius:3px;text-align:center;font-size:13px;line-height:25px;color:#04BF8B">详情</div>
<div class="tc" style="left:219px;top:532px;width:180px">小桌<span class="n">22</span></div>
<div class="tc" style="left:399px;top:532px;width:200px"><span class="n">XF17116548646682655</span></div>
<div class="tc" style="left:599px;top:532px;width:120px">测试</div>
<div class="tc" style="left:719px;top:532px;width:120px">￥<span class="n">3333.68</span></div>
<div class="tc" style="left:839px;top:532px;width:120px">￥<span class="n">482.94</span></div>
<div class="tc" style="left:959px;top:532px;width:120px">￥<span class="n">2850.74</span></div>
<div class="tc" style="left:1079px;top:532px;width:120px">￥<span class="n">2850.74</span></div>
<div class="tc" style="left:1199px;top:532px;width:200px">已结账（反结账）</div>
<div class="tc" style="left:1399px;top:532px;width:200px"><span class="d">2024-11-26 13:41:40</span></div>
<div class="tc" style="left:1599px;top:532px;width:200px"><span class="d">2024-11-29 10:48:39</span></div>
<div class="a" style="left:1826px;top:530px;width:48px;height:24px;border:1px solid #04BF8B;border-radius:3px;text-align:center;font-size:13px;line-height:25px;color:#04BF8B">详情</div>
<div class="tc" style="left:219px;top:572px;width:180px">小桌<span class="n">23</span></div>
<div class="tc" style="left:399px;top:572px;width:200px"><span class="n">XF17116890314752015</span></div>
<div class="tc" style="left:599px;top:572px;width:120px">散客</div>
<div class="tc" style="left:719px;top:572px;width:120px">￥<span class="n">138</span></div>
<div class="tc" style="left:839px;top:572px;width:120px">￥<span class="n">18</span></div>
<div class="tc" style="left:959px;top:572px;width:120px">￥<span class="n">120</span></div>
<div class="tc" style="left:1079px;top:572px;width:120px">￥<span class="n">120</span></div>
<div class="tc" style="left:1199px;top:572px;width:200px">已结账</div>
<div class="tc" style="left:1399px;top:572px;width:200px"><span class="d">2024-11-26 19:24:54</span></div>
<div class="tc" style="left:1599px;top:572px;width:200px"><span class="d">2024-11-29 10:40:30</span></div>
<div class="a" style="left:1826px;top:570px;width:48px;height:24px;border:1px solid #04BF8B;border-radius:3px;text-align:center;font-size:13px;line-height:25px;color:#04BF8B">详情</div>
<div class="tc" style="left:219px;top:612px;width:180px"><span class="n">2</span>号包厢</div>
<div class="tc" style="left:399px;top:612px;width:200px"><span class="n">XF17113428204142605</span></div>
<div class="tc" style="left:599px;top:612px;width:120px">散客</div>
<div class="tc" style="left:719px;top:612px;width:120px">￥<span class="n">139.8</span></div>
<div class="tc" style="left:839px;top:612px;width:120px">￥<span class="n">13.98</span></div>
<div class="tc" style="left:959px;top:612px;width:120px">￥<span class="n">125.82</span></div>
<div class="tc" style="left:1079px;top:612px;width:120px">￥<span class="n">125.82</span></div>
<div class="tc" style="left:1199px;top:612px;width:200px">已结账</div>
<div class="tc" style="left:1399px;top:612px;width:200px"><span class="d">2024-11-24 08:56:30</span></div>
<div class="tc" style="left:1599px;top:612px;width:200px"><span class="d">2024-11-24 15:14:59</span></div>
<div class="a" style="left:1826px;top:610px;width:48px;height:24px;border:1px solid #04BF8B;border-radius:3px;text-align:center;font-size:13px;line-height:25px;color:#04BF8B">详情</div>
<div class="tc" style="left:219px;top:652px;width:180px"><span class="n">1</span>号包厢</div>
<div class="tc" style="left:399px;top:652px;width:200px"><span class="n">XF17113425697079325</span></div>
<div class="tc" style="left:599px;top:652px;width:120px">散客</div>
<div class="tc" style="left:719px;top:652px;width:120px">￥<span class="n">1098</span></div>
<div class="tc" style="left:839px;top:652px;width:120px">￥<span class="n">0</span></div>
<div class="tc" style="left:959px;top:652px;width:120px">￥<span class="n">1098</span></div>
<div class="tc" style="left:1079px;top:652px;width:120px">￥<span class="n">1098</span></div>
<div class="tc" style="left:1199px;top:652px;width:200px">已结账</div>
<div class="tc" style="left:1399px;top:652px;width:200px"><span class="d">2024-11-24 08:54:07</span></div>
<div class="tc" style="left:1599px;top:652px;width:200px"><span class="d">2024-11-24 08:55:56</span></div>
<div class="a" style="left:1826px;top:650px;width:48px;height:24px;border:1px solid #04BF8B;border-radius:3px;text-align:center;font-size:13px;line-height:25px;color:#04BF8B">详情</div>
<div class="a" style="left:222px;top:674px;width:1276px;height:6px;background:#d6d6d8;border-radius:3px"></div>
<!--pag-->
<div class="a" style="left:220px;top:694px;width:100px;height:24px;border:1px solid #dcdfe6;border-radius:3px"></div>
<div class="a" style="left:228px;top:697px;font-size:13px;line-height:20px;color:#606266">10条/页</div>
<svg class="a" style="left:300px;top:703px" width="11" height="7" viewBox="0 0 11 7"><path d="M0.5 0.8L5.5 5.8L10.5 0.8" fill="none" stroke="#c0c4cc" stroke-width="1"/></svg>
<div class="a" style="left:336px;top:694px;width:24px;height:24px;background:#f4f4f5;border-radius:2px"></div><svg class="a" style="left:344px;top:701px" width="8" height="10" viewBox="0 0 8 10"><path d="M6 0.8L2 5L6 9.2" fill="none" stroke="#c0c4cc" stroke-width="1"/></svg>
<div class="a" style="left:368px;top:694px;width:24px;height:24px;background:#04BF8B;border-radius:2px;text-align:center;font-size:13px;line-height:25px;color:#fff;font-weight:bold">1</div>
<div class="a" style="left:400px;top:694px;width:24px;height:24px;background:#f4f4f5;border-radius:2px;text-align:center;font-size:13px;line-height:25px;color:#303133">2</div>
<div class="a" style="left:432px;top:694px;width:24px;height:24px;background:#f4f4f5;border-radius:2px;text-align:center;font-size:13px;line-height:25px;color:#303133">3</div>
<div class="a" style="left:464px;top:694px;width:24px;height:24px;background:#f4f4f5;border-radius:2px;text-align:center;font-size:13px;line-height:25px;color:#303133">4</div>
<div class="a" style="left:496px;top:694px;width:24px;height:24px;background:#f4f4f5;border-radius:2px;text-align:center;font-size:13px;line-height:25px;color:#303133">5</div>
<div class="a" style="left:528px;top:694px;width:24px;height:24px;background:#f4f4f5;border-radius:2px;text-align:center;font-size:13px;line-height:25px;color:#303133">6</div>
<div class="a" style="left:560px;top:694px;width:24px;height:24px;background:#f4f4f5;border-radius:2px"></div><svg class="a" style="left:567px;top:705px" width="11" height="3" viewBox="0 0 11 3"><circle cx="1.5" cy="1.5" r="1.3" fill="#303133"/><circle cx="5.5" cy="1.5" r="1.3" fill="#303133"/><circle cx="9.5" cy="1.5" r="1.3" fill="#303133"/></svg>
<div class="a" style="left:592px;top:694px;width:24px;height:24px;background:#f4f4f5;border-radius:2px;text-align:center;font-size:13px;line-height:25px;color:#303133">9</div>
<div class="a" style="left:624px;top:694px;width:24px;height:24px;background:#f4f4f5;border-radius:2px"></div><svg class="a" style="left:633px;top:701px" width="8" height="10" viewBox="0 0 8 10"><path d="M2 0.8L6 5L2 9.2" fill="none" stroke="#303133" stroke-width="1"/></svg>
<div class="a" style="left:667px;top:697px;font-size:13px;line-height:20px;color:#606266">共 89 条</div>
<div class="a" style="left:729px;top:697px;font-size:13px;line-height:20px;color:#606266">前往</div>
<div class="a" style="left:761px;top:694px;width:56px;height:24px;border:1px solid #dcdfe6;border-radius:3px;text-align:center;font-size:13px;line-height:23px;color:#606266">1</div>
<div class="a" style="left:825px;top:697px;font-size:13px;line-height:20px;color:#606266">页</div>
<div class="a" style="left:1631px;top:829px;font-size:20px;line-height:26px;color:#c8c8c8">激活 <span style="font-size:21.6px">Windows</span></div>
<div class="a" style="left:1631px;top:856px;font-size:14.5px;line-height:20px;color:#c8c8c8">转到<span style="letter-spacing:1.5px">“</span>设置<span style="letter-spacing:1.5px">”</span>以激活 <span style="font-size:16.5px">Windows</span>。</div>
</body></html>
